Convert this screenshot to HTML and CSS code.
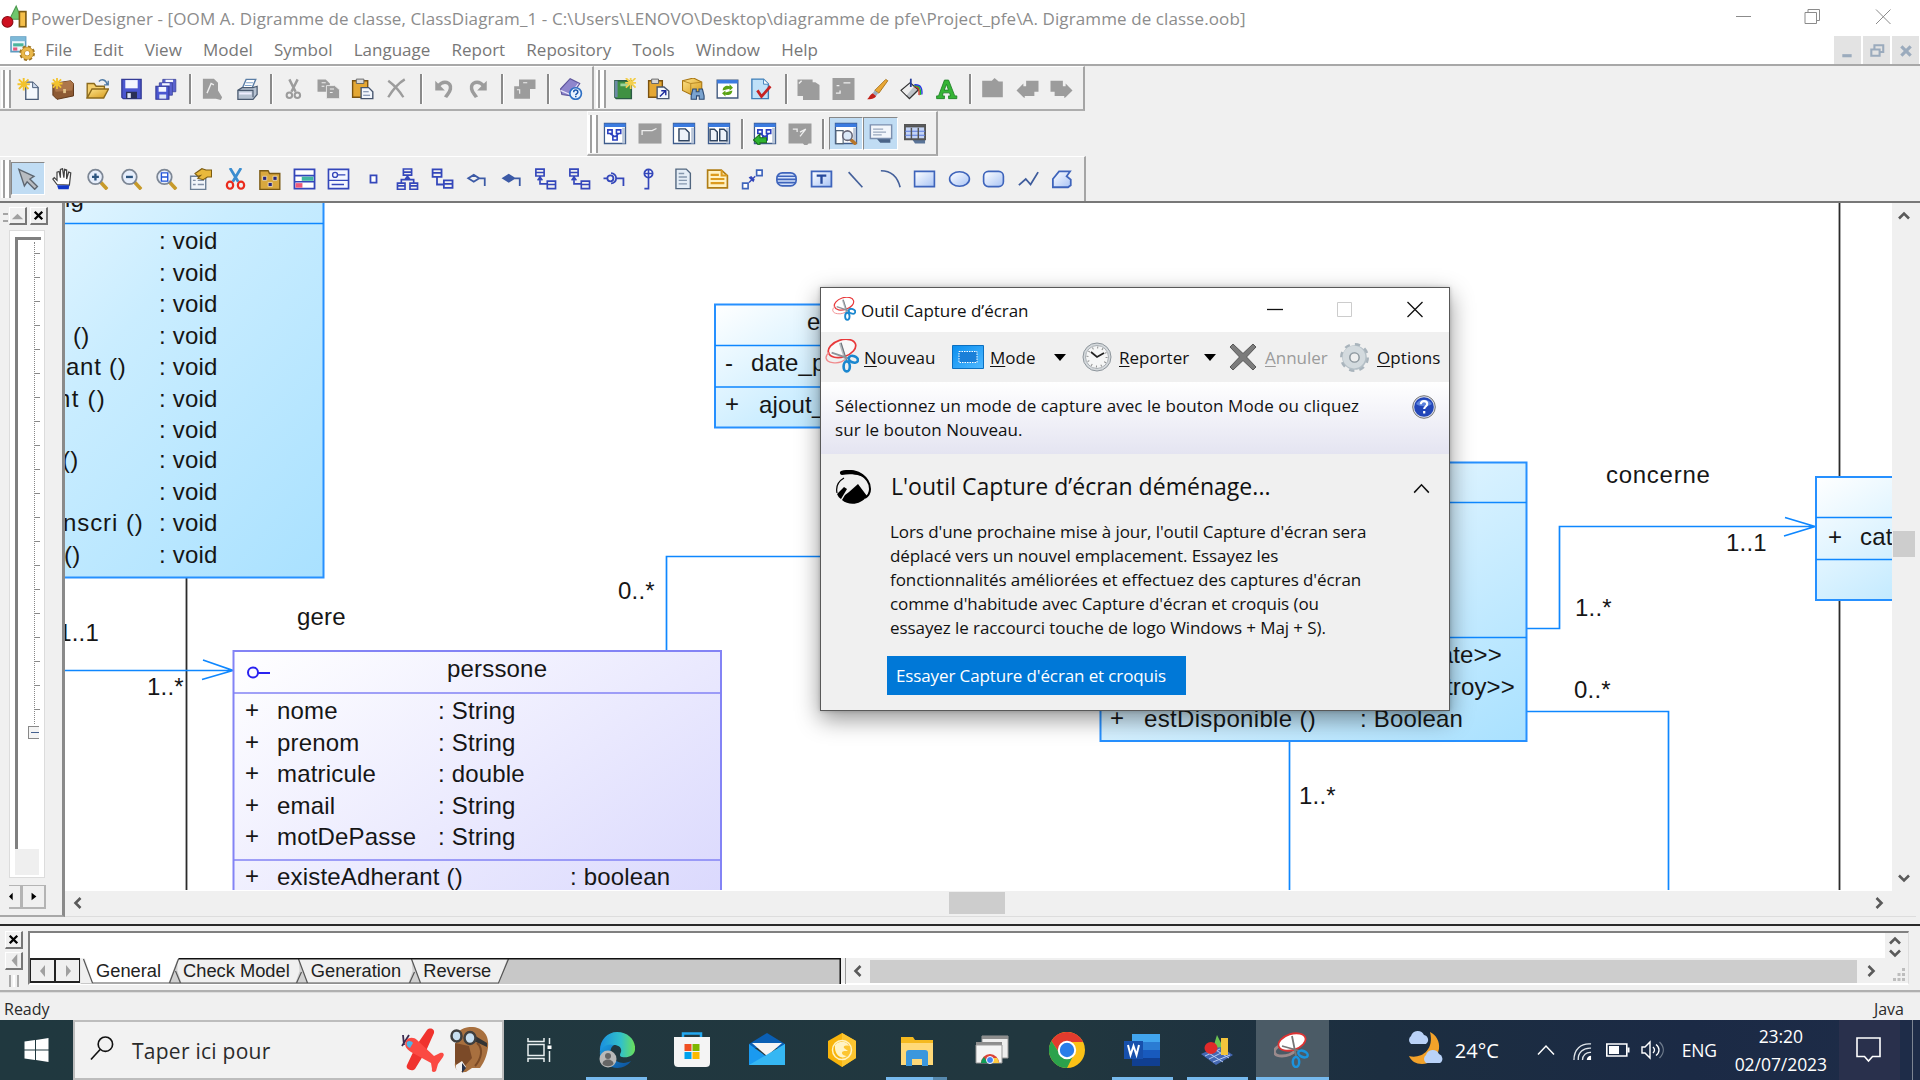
FILE: index.html
```html
<!DOCTYPE html>
<html lang="fr">
<head>
<meta charset="utf-8">
<title>PowerDesigner</title>
<link rel="stylesheet" href="styles.css">
</head>
<body>
<svg class="defs" width="0" height="0">
<defs>
<linearGradient id="gBlue" x1="0" y1="0" x2="1" y2="1"><stop offset="0" stop-color="#fff"/><stop offset="1" stop-color="#a9c4f5"/></linearGradient>
<linearGradient id="gGold" x1="0" y1="0" x2="1" y2="1"><stop offset="0" stop-color="#ffe48a"/><stop offset="1" stop-color="#d59a1c"/></linearGradient>
<linearGradient id="gClass" x1="0" y1="0" x2="1" y2="1"><stop offset="0" stop-color="#fff"/><stop offset="1" stop-color="#a9e1ff"/></linearGradient>
<linearGradient id="gClass2" x1="0" y1="0" x2="1" y2="1"><stop offset="0" stop-color="#f4fbff"/><stop offset=".45" stop-color="#caedff"/><stop offset="1" stop-color="#a9e1ff"/></linearGradient>
<linearGradient id="gPers" x1="0" y1="0" x2="1" y2="1"><stop offset="0" stop-color="#fff"/><stop offset="1" stop-color="#d5d3fd"/></linearGradient>
<linearGradient id="gEdge" x1="0" y1="0" x2="1" y2="0"><stop offset="0" stop-color="#1a8fe0"/><stop offset=".6" stop-color="#32c1c9"/><stop offset="1" stop-color="#6be058"/></linearGradient>
<linearGradient id="gEdge2" x1="0" y1="0" x2="1" y2="1"><stop offset="0" stop-color="#1b9de2"/><stop offset="1" stop-color="#0c4f9b"/></linearGradient>
<linearGradient id="gMode" x1="0" y1="0" x2="1" y2="1"><stop offset="0" stop-color="#0a8ff0"/><stop offset="1" stop-color="#4fb8ff"/></linearGradient>
</defs>
<symbol id="pd" viewBox="0 0 24 24"><path d="M8 14 14 2l5 12z" fill="#6fc66d" stroke="#4c9a50"/><circle cx="6" cy="16.500" r="5" fill="#cf1020" stroke="#8c0c14"/><rect x="17" y="7" width="6" height="14" fill="#f5bf4a" stroke="#7c5a12" stroke-width="1.500"/></symbol>
<symbol id="doc-gear" viewBox="0 0 24 24"><path d="M1 1h14v14H1z" fill="#eef6fb" stroke="#5c9ac0" stroke-width="1.500"/><path d="M1 1h14v4H1z" fill="#7db9d8"/><path d="M3 7h10v3H3z" fill="#4bb59d"/><path d="M3 11h4v3H3z" fill="#e4587c"/><circle cx="16.500" cy="16.500" r="6" fill="none" stroke="#9b7423" stroke-width="3" stroke-dasharray="2.700 2"/><circle cx="16.500" cy="16.500" r="4.200" fill="#fff" stroke="#b98527" stroke-width="4"/><circle cx="16.500" cy="16.500" r="4.200" fill="none" stroke="#eab84a" stroke-width="3"/></symbol>
<symbol id="new" viewBox="0 0 16 16"><path d="M6 3h5l4 4v8.500H6z" fill="#f4f8fd" stroke="#4a5c78"/><path d="M11 3v4h4" fill="#cfdcee" stroke="#4a5c78" stroke-width=".7"/><path d="M1 1l7 7M8 1 1 8M4.500 0v9M0 4.500h9" stroke="#f3c32c" stroke-width="1.400"/></symbol>
<symbol id="case" viewBox="0 0 16 16"><path d="M1 4 14 2l2 2v9l-12 2.500-3-3z" fill="#8d5a34" stroke="#5d3517" stroke-width=".7"/><path d="M1 4l13-2 2 2-1 5-12 1z" fill="#ad764a"/><rect x="8.500" y="8" width="2" height="3" fill="#e2c38a"/><path d="M1 1l6 6M7 1 1 7M4 0v8M0 4h8" stroke="#f3c32c" stroke-width="1.300"/></symbol>
<symbol id="open" viewBox="0 0 16 16"><path d="M.5 14.500V4h5l1.500 2h6v2" fill="#f4cf6d" stroke="#8c6a1c"/><path d="M.5 14.500 4 8h12l-3.500 6.500z" fill="url(#gGold)" stroke="#8c6a1c"/><path d="M9 2.500c2-2 5-1.500 6 2M15.800 2v3h-3" fill="none" stroke="#4f7aa5"/></symbol>
<symbol id="save" viewBox="0 0 16 16"><path d="M1 1h14v14H2l-1-1z" fill="#4a56d0" stroke="#343b96"/><path d="M3.500 1.500h9v6h-9z" fill="#f4f6ff"/><path d="M4 10h8v5H4z" fill="#2a2f55"/><path d="M5 11h2.500v3.500H5z" fill="#dfe6f6"/></symbol>
<symbol id="save-all" viewBox="0 0 16 16"><g fill="#5a62d0" stroke="#3d449c" stroke-width=".6"><path d="M6 1h9.500v9H6z"/><path d="M8 1.300h5.500V3H8z" fill="#f4f6ff" stroke="none"/><path d="M3.500 3.500H13v9H3.500z"/><path d="M5.500 3.800H11V5.500H5.500z" fill="#f4f6ff" stroke="none"/></g><path d="M1 6h9.500v9.500H1z" fill="#4a56d0" stroke="#343b96" stroke-width=".8"/><path d="M3 6.500h5.500v3.500H3z" fill="#f4f6ff"/><path d="M3.500 12h5v3h-5z" fill="#dfe6f6"/></symbol>
<symbol id="find-off" viewBox="0 0 16 16"><path d="M1 .5h8l3 3V9l3 5-1 2-3.500-1H1z" fill="#9c9c9c"/><path d="M4 11 7 4l2 1" fill="none" stroke="#eee"/></symbol>
<symbol id="print" viewBox="0 0 16 16"><path d="M4 8 7 1h7l-3 7z" fill="#fff" stroke="#5a7da5"/><path d="M7 3.500h5M6 5.500h5" stroke="#7fa3cc" stroke-width=".8"/><path d="M1 9l3-2h8l3-1v6l-3 3.500H1z" fill="#b7c3d2" stroke="#4a5a70" stroke-width=".9"/><path d="M1 9h11v5" fill="none" stroke="#4a5a70" stroke-width=".8"/><path d="M2 10.500h9v1.500H2z" fill="#eef"/></symbol>
<symbol id="cut-off" viewBox="0 0 16 16"><path d="M5 1l4.500 9M11 1 6.500 10" stroke="#9c9c9c" stroke-width="1.800"/><g fill="none" stroke="#9c9c9c" stroke-width="1.500"><circle cx="5" cy="12.500" r="2"/><circle cx="10.800" cy="12.500" r="2"/></g></symbol>
<symbol id="copy-off" viewBox="0 0 16 16"><path d="M0 1h6l3 3v6H0z" fill="#9c9c9c"/><path d="M6.500 5.500h6L16 8.500V15H6.500z" fill="#9c9c9c" stroke="#efefef" stroke-width=".6"/><path d="M3 3.500h3M3 6h2M9 8h3M9 10.500h2" stroke="#efefef" stroke-width=".8"/></symbol>
<symbol id="paste" viewBox="0 0 16 16"><path d="M.8 2h11v12H.8z" fill="#e4a733" stroke="#7a5210"/><path d="M3.500.8h5.500V4H3.500z" fill="#d8d8d8" stroke="#666" stroke-width=".7"/><path d="M7 7h5.500l3 3v5H7z" fill="#f2f6fc" stroke="#46556e"/><path d="M8.500 10h4M8.500 12.500h5" stroke="#6c80a4" stroke-width=".8"/></symbol>
<symbol id="del-off" viewBox="0 0 16 16"><path d="M2 2c4 3 8 7 11 12M14 1C9 4 5 9 2 14" fill="none" stroke="#9c9c9c" stroke-width="1.700"/></symbol>
<symbol id="undo-off" viewBox="0 0 16 16"><path d="M4 6c4-5 10-3 9 2-.5 3-2.500 4-3.500 6" fill="none" stroke="#9c9c9c" stroke-width="2.600"/><path d="M2 2v7h7z" fill="#9c9c9c"/></symbol>
<symbol id="redo-off" viewBox="0 0 16 16"><path d="M12 6C8 1 2 3 3 8c.5 3 2.500 4 3.500 6" fill="none" stroke="#9c9c9c" stroke-width="2.600"/><path d="M14 2v7H7z" fill="#9c9c9c"/></symbol>
<symbol id="prop-off" viewBox="0 0 16 16"><path d="M4 1h12v7h-4v7H.5V6H4z" fill="#9c9c9c"/><path d="M2.500 8.500h2v3M7 3.500h3" stroke="#efefef" stroke-width=".8" fill="none"/></symbol>
<symbol id="book-help" viewBox="0 0 16 16"><path d="M0 8 7 .5l7 3.500-6 9-7-1z" fill="#8f86cd" stroke="#5e559c" stroke-width=".8"/><path d="M0 9l7 3 6-8" fill="none" stroke="#e8e6f8" stroke-width=".8"/><circle cx="11" cy="11.300" r="4.200" fill="#eaf3ff" stroke="#2d6fc4" stroke-width="1.200"/><path d="M9.600 10.300c0-2 3-2 3 0 0 1-1.500 1-1.500 2.200M11.100 13v1" fill="none" stroke="#1b57ad" stroke-width="1.100"/></symbol>
<symbol id="book-new" viewBox="0 0 16 16"><path d="M1 2h12v13H2L1 14z" fill="#3f9142" stroke="#2a5a45"/><path d="M1 2h2v12H1z" fill="#6c8aa6"/><path d="M5 4h6v2H5z" fill="#9ed49b"/><path d="M9 0l7 7M16 0 9 7M12.500-1v9M8.500 3.500h8" stroke="#f3cf4c" stroke-width="1.300"/></symbol>
<symbol id="paste-link" viewBox="0 0 16 16"><path d="M.8 2h10v12H.8z" fill="#e4a733" stroke="#7a5210"/><path d="M3 .8h5V4H3z" fill="#d8d8d8" stroke="#666" stroke-width=".7"/><path d="M7 6.500h5l3.500 3v5.500H7z" fill="#f2f6fc" stroke="#46556e"/><path d="M9 13.500 13 9.500M10 9.300h3.300v3.200" fill="none" stroke="#1c2b9c"/></symbol>
<symbol id="box-find" viewBox="0 0 16 16"><path d="M0 2 8 0l6 3v7l-8 2-6-3z" fill="url(#gGold)" stroke="#a87511" stroke-width=".8"/><path d="M0 2l6 2 8-1M6 4v8" fill="none" stroke="#b78722" stroke-width=".7"/><path d="M7.500 8h2.500v2h2V8h2.500l1.200 5v2.500h-3.500V13h-2v2.500H6.300V13z" fill="#7aa3cf" stroke="#2d4a72" stroke-width=".8"/></symbol>
<symbol id="refresh" viewBox="0 0 16 16"><path d="M.5 1.500h15v13H.5z" fill="#fff" stroke="#41597e"/><path d="M.5 1.500h15V4H.5z" fill="#3b7be0"/><path d="M4.500 9c0-3 3-4 5-3V4.500L12 7 9.500 9.300V7.800M11.500 9c0 3-3 4-5 3v1.500L4 11l2.500-2v1.500" fill="#5ba314"/></symbol>
<symbol id="check-doc" viewBox="0 0 16 16"><path d="M1 .8h8.500l3.500 3.500V15H1z" fill="#bfe1f8" stroke="#3f7fb8"/><path d="M9.500 1v3.500H13" fill="#fff" stroke="#3f7fb8" stroke-width=".7"/><path d="M5 9l3 4.500L14.500 6" fill="none" stroke="#c62323" stroke-width="2"/></symbol>
<symbol id="off1" viewBox="0 0 16 16"><path d="M0 1h11v2h2l3 2v11H4v-3H0z" fill="#9c9c9c"/><path d="M1 4 3 2" stroke="#efefef"/></symbol>
<symbol id="off2" viewBox="0 0 16 16"><path d="M0 0h16v16H0z" fill="#9c9c9c"/><path d="M8 3.500h5M3 5.500h2M2.500 11h3v-2" fill="none" stroke="#eee"/></symbol>
<symbol id="brush" viewBox="0 0 16 16"><path d="M6 9 14 1l1.500 1L9 11z" fill="#e9a735" stroke="#a26b10" stroke-width=".6"/><path d="M6 9l2.500 2-1.500 2-2.500-2z" fill="#9ab"/><path d="M4.500 11 7 13c-1 2-4 2.500-6.500 2.500C2 14 2.500 12 4.500 11z" fill="#c22019"/></symbol>
<symbol id="bucket" viewBox="0 0 16 16"><path d="M.5 9 7 3.500l6 5-6.500 6.500z" fill="#bfc3c8" stroke="#333"/><path d="M1 9l6-5 2.500 2.500-5 6z" fill="#eee"/><path d="M7.500.5v6" stroke="#223a9a" stroke-width="1.300"/><path d="M10 6.500c3-1 4 2 3.500 6" fill="none" stroke="#e02020"/><path d="M10 5.800c4-1 5 3 4.500 6.500" fill="none" stroke="#18b828"/><path d="M10 5c5-.5 6 3 5.500 7" fill="none" stroke="#2838e0"/></symbol>
<symbol id="font-a" viewBox="0 0 16 16"><path d="M6.500 1.500h3L14 13h1.500v2H9.500v-2H11l-.8-2.200H5.600L5 13h1.500v2H.8v-2H2.200zM6.400 8.800h3L8 4.600z" fill="#35b435" stroke="#1b7d22" stroke-width=".6"/></symbol>
<symbol id="off3" viewBox="0 0 16 16"><path d="M.5 2h7l2-2 3 2.500h3V14H.5z" fill="#9c9c9c"/></symbol>
<symbol id="off4" viewBox="0 0 16 16"><path d="M0 9l5-5V6h2V2h9v8h-3v3H6v1.500L5 14z" fill="#9c9c9c"/></symbol>
<symbol id="off5" viewBox="0 0 16 16"><path d="M16 9l-5-5V6H9V2H0v8h3v3h7v1.500l1-.5z" fill="#9c9c9c"/></symbol>
<symbol id="win" viewBox="0 0 16 16"><path d="M.6 1h14.800v14H.6z" fill="#fff" stroke="#3e5c8c"/><path d="M.6 1h14.800v2.500H.6z" fill="#3b7be0"/><path d="M13 4h2v11h-2z" fill="#b9c6d8"/></symbol>
<symbol id="win-dia" viewBox="0 0 16 16"><use href="#win"/><path d="M3 5.500h3v2.500H3zM9 5.500h3v2.500H9zM6.500 10h3v2.500h-3zM4.500 8l3 2M10.500 8 8.500 10" fill="none" stroke="#2a3fc0" stroke-width="1.100"/></symbol>
<symbol id="win-off" viewBox="0 0 16 16"><path d="M0 1h16v14H0z" fill="#9c9c9c"/><path d="M2.500 9V6h7l3-1.500" fill="none" stroke="#eee" stroke-width=".9"/></symbol>
<symbol id="win-page" viewBox="0 0 16 16"><use href="#win"/><path d="M4.500 4.800h4.500l2.500 2.500V13h-7z" fill="#eef3fa" stroke="#2e435f"/></symbol>
<symbol id="win-pages" viewBox="0 0 16 16"><use href="#win"/><path d="M1.800 5h3l2 2v6h-5zM8.500 5h3l2 2v6h-5z" fill="#eef3fa" stroke="#2e435f"/></symbol>
<symbol id="win-back" viewBox="0 0 16 16"><use href="#win-dia"/><path d="M0 12.500l4.500-4v2.500H9v3.500H4.500V17z" fill="#2fb52f" stroke="#176a18" stroke-width=".7"/></symbol>
<symbol id="win-off2" viewBox="0 0 16 16"><path d="M0 1h16v14h-2l-1 1h-2l-1-1H0z" fill="#9c9c9c"/><path d="M3 5h3v2M8 7l4-2-4 5" fill="none" stroke="#eee" stroke-width=".9"/></symbol>
<symbol id="win-zoom" viewBox="0 0 16 16"><use href="#win"/><path d="M1 6h5v9H1z" fill="#fff" stroke="#567" stroke-width=".8"/><path d="M11 12l4 3.500" stroke="#b8772a" stroke-width="2.400"/><circle cx="9" cy="9.500" r="3.300" fill="#dbe9f8" stroke="#667" stroke-width="1.100"/></symbol>
<symbol id="note-win" viewBox="0 0 16 16"><path d="M4.500 11h10v3.500h-7z" fill="#4a6488"/><path d="M.6 2h14.800v9.500H.6z" fill="#f3f6fb" stroke="#7b8fae"/><path d="M2.500 5h7M2.500 7h9M2.500 9h6" stroke="#99a7bd" stroke-width=".9"/></symbol>
<symbol id="grid-win" viewBox="0 0 16 16"><path d="M6 12h9v3H8z" fill="#5a7498"/><path d="M1 2h14v10H1z" fill="#c4d4f6" stroke="#555" stroke-width="1.300"/><path d="M1 3h14" stroke="#555" stroke-width="1.500"/><path d="M1 6.500h14M1 9.300h14" stroke="#5c7ce0" stroke-width=".7"/><path d="M5.500 4v8M10.300 4v8" stroke="#555"/></symbol>
<symbol id="pointer" viewBox="0 0 16 16"><path d="M1 1l11 5-3 2 5.500 5.500-2 2L7 10l-2 3z" fill="#b8bcc1" stroke="#5d6670"/></symbol>
<symbol id="hand" viewBox="0 0 16 16"><path d="M4 12 1 8l1-1 2 2V3l1.500-.5L6.500 7V1L8 .5 9 7l.5-6L11 1.500V8l1.500-5 1.500.5-1 9z" fill="#fff" stroke="#444" stroke-width=".9"/><path d="M4 12.500h9l-.5 3H5z" fill="#1238c8"/></symbol>
<symbol id="mag" viewBox="0 0 16 16"><path d="M10 10l5 5.500" stroke="#c79a2a" stroke-width="2.600"/><circle cx="6.500" cy="6.500" r="5.300" fill="#e6eefb" stroke="#7d8795" stroke-width="1.300"/></symbol>
<symbol id="zin" viewBox="0 0 16 16"><use href="#mag"/><path d="M6.500 4v5M4 6.500h5" stroke="#2c5580" stroke-width="1.700"/></symbol>
<symbol id="zout" viewBox="0 0 16 16"><use href="#mag"/><path d="M4 6.500h5" stroke="#2c5580" stroke-width="1.700"/></symbol>
<symbol id="zfit" viewBox="0 0 16 16"><use href="#mag"/><path d="M4.300 3.500h4.600v6H4.300zM4.300 6.500h4.600" fill="#fff" stroke="#2456d8"/></symbol>
<symbol id="props" viewBox="0 0 16 16"><path d="M.8 6h11v9.500H.8z" fill="#f1f5fa" stroke="#6c7f96"/><path d="M2.500 9h2M2.500 12h2M6 9h4.500M6 12h4.500" stroke="#8391a6"/><path d="M4 4l5-3.500 3 1h4v5h-3l-3 2-4-1 2-2-2 .5z" fill="#e9b93c" stroke="#7c5c10" stroke-width=".8"/></symbol>
<symbol id="cut" viewBox="0 0 16 16"><path d="M4 0l6 10M12 0 6 10" stroke="#3b8dd0" stroke-width="2"/><g fill="none" stroke="#ea2b1d" stroke-width="1.600"><ellipse cx="4" cy="12.500" rx="2.300" ry="2.600"/><ellipse cx="12" cy="12.500" rx="2.300" ry="2.600"/></g></symbol>
<symbol id="pkg" viewBox="0 0 16 16"><path d="M1 2h6l1 2h7.500v11.500H1z" fill="#d9a83e" stroke="#7b5a14"/><path d="M3 6h3v3H3zM10.500 6h3v3h-3zM7 10.500h3v3H7z" fill="#26257f" stroke="#fbe8b0" stroke-width=".6"/></symbol>
<symbol id="cls" viewBox="0 0 16 16"><path d="M.7 1h14.600v14H.7z" fill="#fff" stroke="#3447ba" stroke-width="1.300"/><path d="M.7 5.500h14.600M.7 10h14.600" stroke="#3447ba" stroke-width="1.200"/><path d="M6 6.300h8.500v3H6z" fill="#3fb6a2"/><path d="M1.500 11h5v3.300h-5z" fill="#ee5a7b"/></symbol>
<symbol id="intf" viewBox="0 0 16 16"><path d="M.7 1h14.600v14H.7z" fill="#f4f7ff" stroke="#3447ba" stroke-width="1.200"/><path d="M1 9h14M3 12h9M7.500 5H13" stroke="#3447ba"/><circle cx="5.500" cy="5" r="1.800" fill="none" stroke="#3447ba"/></symbol>
<symbol id="port" viewBox="0 0 16 16"><path d="M5.800 5.300h4.400v5.400H5.800z" fill="#fff" stroke="#3447ba" stroke-width="1.300"/></symbol>
<symbol id="gen" viewBox="0 0 16 16"><path d="M5 .7h6v4.500H5zM5 3h6M.7 11h5.500v4.500H.7zM.7 13h5.500M9.800 11h5.500v4.500H9.800zM9.800 13h5.500M8 5.500v3M3.500 11V8.500h9V11M8 6l-1.500 2h3z" fill="none" stroke="#3447ba" stroke-width="1.200"/></symbol>
<symbol id="assoc" viewBox="0 0 16 16"><path d="M.8 1h6.500v5.500H.8zM.8 3.500h6.500M9 9h6.300v5.500H9zM9 11.500h6.300M4 6.500V12h5" fill="none" stroke="#3447ba" stroke-width="1.300"/></symbol>
<symbol id="aggr" viewBox="0 0 16 16"><path d="M2 7.500 6 5l4 2.500L6 10zM10 7.500h4V13" fill="none" stroke="#3c5aa6" stroke-width="1.300"/></symbol>
<symbol id="comp" viewBox="0 0 16 16"><path d="M2 7.500 6 5l4 2.500L6 10zM10 7.500h4V13" fill="none" stroke="#3c5aa6" stroke-width="1.300"/><path d="M2 7.500 6 5l4 2.500L6 10z" fill="#3c5aa6"/></symbol>
<symbol id="dep" viewBox="0 0 16 16"><path d="M1 .8h6v5H1zM1 3.300h6M9.300 9.500h6V15h-6zM9.300 12h6M4 7v4.500h5M2.300 9 4 6.500 5.700 9" fill="none" stroke="#3447ba" stroke-width="1.200"/></symbol>
<symbol id="req" viewBox="0 0 16 16"><circle cx="5" cy="7.500" r="2.200" fill="none" stroke="#3447ba" stroke-width="1.300"/><path d="M5.500 3.800a3.700 3.700 0 0 1 0 7.400M9 7.500h5.500V13M0 7.500h2.500" fill="none" stroke="#3447ba" stroke-width="1.300"/></symbol>
<symbol id="inner" viewBox="0 0 16 16"><circle cx="8" cy="4" r="3" fill="#fff" stroke="#3447ba" stroke-width="1.300"/><path d="M8 1v6M5 4h6M8 7v8H5" fill="none" stroke="#3447ba" stroke-width="1.200"/></symbol>
<symbol id="file" viewBox="0 0 16 16"><path d="M2.500.8h7.500l3 3V15H2.500z" fill="#e4edf6" stroke="#51667f"/><path d="M4.500 4h4M4.500 6.500h6M4.500 9h6M4.500 11.500h6" stroke="#8497ad"/></symbol>
<symbol id="note" viewBox="0 0 16 16"><path d="M.8 1.500h10l4.400 4V14.500H.8z" fill="#fff2c4" stroke="#b07d15" stroke-width="1.200"/><path d="M11 1.500v4h4M3 5h6M3 8h10M3 11h10" fill="none" stroke="#dc9b1e" stroke-width="1.500"/></symbol>
<symbol id="link" viewBox="0 0 16 16"><path d="M.8 11h4v4h-4zM11 1.500h4v4h-4z" fill="#fff" stroke="#3e64bb" stroke-width="1.200"/><path d="M5.500 10.500 10 6M6 7l1-.5 2 2-.5 1z" fill="#3447ba" stroke="#3447ba"/></symbol>
<symbol id="drum" viewBox="0 0 16 16"><rect x="1" y="3.500" width="14" height="9.500" rx="4" fill="#d5e2fa" stroke="#3e64bb" stroke-width="1.200"/><path d="M1.500 6h13M1 8.300h14M1.500 10.600h13" stroke="#3e64bb" stroke-width="1.200"/></symbol>
<symbol id="title-t" viewBox="0 0 16 16"><path d="M.8 2.500h14.400v11H.8z" fill="url(#gBlue)" stroke="#3e64bb" stroke-width="1.300"/><path d="M4.500 5.500h7M8 5.500v6" stroke="#27499b" stroke-width="1.700"/></symbol>
<symbol id="line" viewBox="0 0 16 16"><path d="M3 3l10 11" stroke="#44609a" stroke-width="1.200"/></symbol>
<symbol id="arc" viewBox="0 0 16 16"><path d="M1 2c7 0 12 4 14 12" fill="none" stroke="#44609a" stroke-width="1.200"/></symbol>
<symbol id="rect" viewBox="0 0 16 16"><path d="M.8 2.500h14.400v11H.8z" fill="url(#gBlue)" stroke="#3e64bb" stroke-width="1.200"/></symbol>
<symbol id="oval" viewBox="0 0 16 16"><ellipse cx="8" cy="8" rx="7.200" ry="5.300" fill="url(#gBlue)" stroke="#3e64bb" stroke-width="1.200"/></symbol>
<symbol id="rrect" viewBox="0 0 16 16"><rect x=".8" y="2.500" width="14.400" height="11" rx="3.500" fill="url(#gBlue)" stroke="#3e64bb" stroke-width="1.200"/></symbol>
<symbol id="poly" viewBox="0 0 16 16"><path d="M1 12.500 6 8l3.500 4L15 3" fill="none" stroke="#3e5c9c" stroke-width="1.300"/></symbol>
<symbol id="shape" viewBox="0 0 16 16"><path d="M1 14V8l4.500-5.500h8L11 6l3 2.500v4L12 14z" fill="url(#gBlue)" stroke="#3e64bb" stroke-width="1.300"/></symbol>
<symbol id="chev" viewBox="0 0 12 12"><path d="M1 8.500 6 3.500l5 5" fill="none" stroke="#5a5a5a" stroke-width="2.600"/></symbol>
<symbol id="snip" viewBox="0 0 36 36"><g fill="none"><ellipse cx="18" cy="10" rx="15" ry="9" transform="rotate(-18 18 10)" stroke="#e8393b" stroke-width="1.800" fill="#fff" fill-opacity=".6"/><path d="M5 14c-6 4-5 10 3 11 6 1 11-1 14-4" stroke="#f08a8c" stroke-width="1.400"/></g><path d="M16 4l6 19" stroke="#b9bec2" stroke-width="2.600"/><path d="M17 4l6 19" stroke="#6f767c" stroke-width="1.200"/><path d="M7 14.500l18 6" stroke="#8d9399" stroke-width="2"/><g fill="none" stroke="#1b87cf" stroke-width="2.800"><ellipse cx="30" cy="21.500" rx="5" ry="3.400" transform="rotate(20 30 21.500)"/><ellipse cx="23" cy="29" rx="3.300" ry="5.300"/></g></symbol>
</svg>

<header class="titlebar">
  <svg class="app-ic"><use href="#pd"/></svg>
  <span class="title">PowerDesigner - [OOM A. Digramme de classe, ClassDiagram_1 - C:\Users\LENOVO\Desktop\diagramme de pfe\Project_pfe\A. Digramme de classe.oob]</span>
  <svg class="winctl" viewBox="0 0 184 36"><path d="M12 16.500h15M81 12.500h11.500v11H81zM84 12.500v-3h11.500V20.500H92.500M152 9.500l14.500 14.500M166.500 9.500 152 24" fill="none" stroke="#8b8b8b" stroke-width="1"/></svg>
</header>

<nav class="menubar">
  <svg class="menu-ic"><use href="#doc-gear"/></svg>
  <span>File</span><span>Edit</span><span>View</span><span>Model</span><span>Symbol</span><span>Language</span><span>Report</span><span>Repository</span><span>Tools</span><span>Window</span><span>Help</span>
  <div class="mdi">
    <svg viewBox="0 0 26 26"><path d="M8 17h9v3H8z" fill="#9babbd"/></svg>
    <svg viewBox="0 0 26 26"><path d="M11 12V8.500h8.500V15H17M8 12.500h8v6H8z" fill="none" stroke="#9babbd" stroke-width="2"/></svg>
    <svg viewBox="0 0 26 26"><path d="M9 9.500l9 9M18 9.500l-9 9" stroke="#9babbd" stroke-width="3"/></svg>
  </div>
</nav>

<section class="toolbars">
  <div class="tb-row">
    <div class="tb b1">
      <i class="grip"></i>
      <b><svg><use href="#new"/></svg></b><b><svg><use href="#case"/></svg></b><b><svg><use href="#open"/></svg></b><b><svg><use href="#save"/></svg></b><b><svg><use href="#save-all"/></svg></b><i class="sep"></i>
      <b><svg><use href="#find-off"/></svg></b><b><svg><use href="#print"/></svg></b><i class="sep"></i>
      <b><svg><use href="#cut-off"/></svg></b><b><svg><use href="#copy-off"/></svg></b><b><svg><use href="#paste"/></svg></b><b><svg><use href="#del-off"/></svg></b><i class="sep"></i>
      <b><svg><use href="#undo-off"/></svg></b><b><svg><use href="#redo-off"/></svg></b><i class="sep"></i>
      <b><svg><use href="#prop-off"/></svg></b><i class="sep"></i>
      <b><svg><use href="#book-help"/></svg></b>
    </div>
    <div class="tb b2">
      <i class="grip"></i>
      <b><svg><use href="#book-new"/></svg></b><b><svg><use href="#paste-link"/></svg></b><b><svg><use href="#box-find"/></svg></b><b><svg><use href="#refresh"/></svg></b><b><svg><use href="#check-doc"/></svg></b><i class="sep"></i>
      <b><svg><use href="#off1"/></svg></b><b><svg><use href="#off2"/></svg></b><b><svg><use href="#brush"/></svg></b><b><svg><use href="#bucket"/></svg></b><b><svg><use href="#font-a"/></svg></b><i class="sep"></i>
      <b><svg><use href="#off3"/></svg></b><b><svg><use href="#off4"/></svg></b><b><svg><use href="#off5"/></svg></b>
    </div>
  </div>
  <div class="tb-row">
    <div class="tb b3">
      <i class="grip"></i>
      <b><svg><use href="#win-dia"/></svg></b><b><svg><use href="#win-off"/></svg></b><b><svg><use href="#win-page"/></svg></b><b><svg><use href="#win-pages"/></svg></b><i class="sep"></i>
      <b><svg><use href="#win-back"/></svg></b><b><svg><use href="#win-off2"/></svg></b><i class="sep"></i>
      <b class="on"><svg><use href="#win-zoom"/></svg></b><b class="on"><svg><use href="#note-win"/></svg></b><b><svg><use href="#grid-win"/></svg></b>
    </div>
  </div>
  <div class="tb-row">
    <div class="tb b4">
      <i class="grip"></i>
      <b class="on"><svg><use href="#pointer"/></svg></b><b><svg><use href="#hand"/></svg></b><b><svg><use href="#zin"/></svg></b><b><svg><use href="#zout"/></svg></b><b><svg><use href="#zfit"/></svg></b><b><svg><use href="#props"/></svg></b><b><svg><use href="#cut"/></svg></b><b><svg><use href="#pkg"/></svg></b><b><svg><use href="#cls"/></svg></b><b><svg><use href="#intf"/></svg></b><b><svg><use href="#port"/></svg></b><b><svg><use href="#gen"/></svg></b><b><svg><use href="#assoc"/></svg></b><b><svg><use href="#aggr"/></svg></b><b><svg><use href="#comp"/></svg></b><b><svg><use href="#dep"/></svg></b><b><svg><use href="#dep"/></svg></b><b><svg><use href="#req"/></svg></b><b><svg><use href="#inner"/></svg></b><b><svg><use href="#file"/></svg></b><b><svg><use href="#note"/></svg></b><b><svg><use href="#link"/></svg></b><b><svg><use href="#drum"/></svg></b><b><svg><use href="#title-t"/></svg></b><b><svg><use href="#line"/></svg></b><b><svg><use href="#arc"/></svg></b><b><svg><use href="#rect"/></svg></b><b><svg><use href="#oval"/></svg></b><b><svg><use href="#rrect"/></svg></b><b><svg><use href="#poly"/></svg></b><b><svg><use href="#shape"/></svg></b>
    </div>
  </div>
</section>

<main class="work">
  <aside class="browser">
    <div class="br-head"><i class="stub"></i><span class="btn3d"><svg viewBox="0 0 16 16"><path d="M2 12 8 6l6 6z" fill="#a0a0a0"/></svg></span><span class="btn3d"><svg viewBox="0 0 16 16"><path d="M4 4l8 8M12 4l-8 8" stroke="#000" stroke-width="2.500"/></svg></span></div>
    <div class="br-frame">
      <div class="br-tree"><i class="vdots"></i><i class="ticks"></i><i class="minus"></i></div>
      <div class="br-foot"></div>
    </div>
    <div class="br-nav"><span class="half"><svg viewBox="0 0 12 22"><path d="M4 7v8L0 11z"/></svg></span><span><svg viewBox="0 0 22 22"><path d="M9 7v8l5-4z"/></svg></span></div>
  </aside>
  <section class="editor">
    <svg class="diagram" viewBox="65 203 1827 687">
      <g class="blk"><path d="M186.500 577V890M1839.500 203V477M1839.500 600V890"/></g>
      <g class="con"><path d="M65 670.500H233M203 660l30 10.500-31 9M666.500 651V556.500H830M1527 628.500h32.500v-102H1816M1785 517.500l30 9-31 9.500M1527 711.500h141.500V890M1289.500 741V890"/></g>
      <g class="cls"><rect x="-60" y="150" width="383.500" height="427.500" fill="url(#gClass2)"/><path d="M60 223.500H323.500"/></g>
      <g class="cls"><rect x="715" y="304.500" width="200" height="123" fill="url(#gClass)"/><path d="M715 345.500h200M715 387h200"/></g>
      <g class="cls"><rect x="1100.500" y="462.500" width="426" height="278.500" fill="url(#gClass)"/><path d="M1100.500 502.500h426M1100.500 637.500h426"/></g>
      <g class="cls"><rect x="1816" y="477" width="200" height="123" fill="url(#gClass)"/><path d="M1816 517.500h200M1816 559.500h200"/></g>
      <g class="cls pers"><rect x="233.500" y="651" width="487.500" height="330" fill="url(#gPers)"/><path d="M233.500 693h487.500M233.500 860h487.500"/></g>
      <g fill="none" stroke="#2a22f0" stroke-width="2"><circle cx="253" cy="672.500" r="5"/><path d="M258 673h12"/></g>
      <g class="txt">
        <text x="84" y="207" text-anchor="end">mg</text>
        <text x="159" y="249">: void</text><text x="159" y="281">: void</text><text x="159" y="312">: void</text><text x="159" y="344">: void</text><text x="159" y="375">: void</text><text x="159" y="407">: void</text><text x="159" y="438">: void</text><text x="159" y="468">: void</text><text x="159" y="500">: void</text><text x="159" y="531">: void</text><text x="159" y="563">: void</text>
        <text x="73" y="344">()</text><text x="66" y="375" textLength="60">ant ()</text><text x="57" y="407" textLength="48">nt ()</text><text x="62" y="468">()</text><text x="63" y="531" textLength="80">nscri ()</text><text x="64" y="563">()</text>
        <text x="99" y="641" text-anchor="end">1..1</text><text x="147" y="695">1..*</text><text x="297" y="625">gere</text><text x="618" y="599">0..*</text>
        <text x="447" y="677">perssone</text>
        <text x="245" y="718">+</text><text x="277" y="719">nome</text><text x="438" y="719">: String</text>
        <text x="245" y="750">+</text><text x="277" y="751">prenom</text><text x="438" y="751">: String</text>
        <text x="245" y="781">+</text><text x="277" y="782">matricule</text><text x="438" y="782">: double</text>
        <text x="245" y="813">+</text><text x="277" y="814">email</text><text x="438" y="814">: String</text>
        <text x="245" y="844">+</text><text x="277" y="845">motDePasse</text><text x="438" y="845">: String</text>
        <text x="245" y="884">+</text><text x="277" y="885">existeAdherant ()</text><text x="570" y="885">: boolean</text>
        <text x="807" y="330">e</text><text x="725" y="371">-</text><text x="751" y="371">date_p</text><text x="725" y="412">+</text><text x="759" y="413">ajout_</text>
        <text x="1502" y="663" text-anchor="end">&lt;&lt;create&gt;&gt;</text><text x="1515" y="695" text-anchor="end">&lt;&lt;destroy&gt;&gt;</text>
        <text x="1110" y="726">+</text><text x="1144" y="727" textLength="172">estDisponible ()</text><text x="1360" y="727">: Boolean</text>
        <text x="1299" y="804">1..*</text><text x="1606" y="483" textLength="104">concerne</text><text x="1726" y="551">1..1</text><text x="1575" y="616">1..*</text><text x="1574" y="698">0..*</text>
        <text x="1828" y="545">+</text><text x="1860" y="545">cat</text>
      </g>
    </svg>
    <div class="vscroll"><svg class="chev"><use href="#chev"/></svg><i></i><svg class="chev down"><use href="#chev"/></svg></div>
    <div class="hscroll"><svg class="chev left"><use href="#chev"/></svg><i></i><svg class="chev right"><use href="#chev"/></svg></div>
  </section>
</main>

<section class="output">
  <div class="out-ctl"><span class="btn3d"><svg viewBox="0 0 16 16"><path d="M4 4l8 8M12 4l-8 8" stroke="#000" stroke-width="2.500"/></svg></span><span class="btn3d"><svg viewBox="0 0 16 16"><path d="M12 1v14L6 8z" fill="#a0a0a0"/></svg></span><i class="hgrip"></i></div>
  <div class="out-box">
    <div class="out-text"></div>
    <div class="out-v"><svg class="chev"><use href="#chev"/></svg><svg class="chev down"><use href="#chev"/></svg></div>
    <div class="out-tabs">
      <div class="navs"><span><svg viewBox="0 0 12 12"><path d="M8 0v12L3 6z" fill="#a0a0a0"/></svg></span><span><svg viewBox="0 0 12 12"><path d="M4 0v12l5-6z" fill="#a0a0a0"/></svg></span></div>
      <div class="tabs">
        <svg viewBox="80 958 760 26" class="tab-shape"><path d="M80 959H840V984H80z" fill="#c8c8c8"/><path d="M80 958H507L498 983H80z" fill="#f0f0f0"/><path d="M84 957H178L169 984H93z" fill="#fff"/><path d="M177 959l-9 24h13l-4-12zM298 959l9 24h-12l4-12zM411 959l9 24h-12l4-12z" fill="#d0d0d0"/><path d="M83 959l9 24M178 959l-9 24M175 971l5 12M298 959l9 24M301 972l-5 11M411 959l9 24M414 972l-5 11M508 959l-10 24H92" fill="none" stroke="#555" stroke-width="1.200"/><path d="M178 958.500H840V984" fill="none" stroke="#111" stroke-width="2"/></svg>
        <span class="t1">General</span><span class="t2">Check Model</span><span class="t3">Generation</span><span class="t4">Reverse</span>
      </div>
      <div class="out-h"><svg class="chev left"><use href="#chev"/></svg><i></i><svg class="chev right"><use href="#chev"/></svg></div>
      <svg class="resize" viewBox="0 0 14 14"><path d="M9 0h3v3H9zM4.500 5h3v3h-3zM9 5h3v3H9zM0 10h3v3H0zM4.500 10h3v3h-3zM9 10h3v3H9z" fill="#bdbdbd"/></svg>
    </div>
  </div>
</section>

<footer class="status"><span>Ready</span><span>Java</span></footer>

<footer class="taskbar">
  <div class="start"><svg viewBox="0 0 24 24"><path d="M0 3.500 10.500 2v9.500H0zM11.500 1.900 24 0v11.500H11.500zM0 12.500h10.500V22L0 20.500zM11.500 12.500H24V24l-12.500-1.900z" fill="#fff"/></svg></div>
  <div class="search">
    <svg class="lens" viewBox="0 0 26 26"><circle cx="16" cy="9" r="7.500" fill="none" stroke="#111" stroke-width="1.700"/><path d="M10.500 14.500 1 25" stroke="#111" stroke-width="1.700"/></svg>
    <span>Taper ici pour</span>
    <svg class="plane" viewBox="0 0 44 46"><path d="M8 8 1 19M2 8l1 10" stroke="#3c2b50" stroke-width="1.800" fill="none"/><path d="M26 3c3-3 8-1 7 3L25 24 14 42c-3 3-10 0-8-4l9-19z" fill="#f0332e"/><path d="M5 14c2-4 8-4 11-1l17 16 6-3c3-1 5 1 3 4l-5 7-2 7c-2 2-5 1-4-2l-1-6L10 25C5 22 3 18 5 14z" fill="#fb4a43"/><path d="M6 15c2-2 5-1 6 1l-3 5c-3-1-4-4-3-6z" fill="#4cb5e8"/></svg>
    <svg class="pilot" viewBox="0 0 40 46"><path d="M9 4C18-3 33-1 37 10c3 8 0 22-7 31h-8l-6 4c-8 1-12-3-11-9L6 16z" fill="#a8703f"/><path d="M5 16l14 3 3 12-8 9c-6 0-9-2-9-6z" fill="#7b4a28"/><path d="M27 16c7 6 4 16-2 23" stroke="#7a4a26" stroke-width="2" fill="none"/><path d="M6 38l6-4 4 6-6 6c-3-1-5-5-4-8z" fill="#f2f2f2"/><path d="M12 36l4 5-4 5z" fill="#26324c"/><path d="M22 7l15 9v4L24 14z" fill="#333"/><g fill="#c8dff0" stroke="#3f3f3f" stroke-width="2.500"><ellipse cx="6.500" cy="9" rx="5" ry="5.500"/><ellipse cx="20" cy="11" rx="5.500" ry="6"/></g></svg>
  </div>
  <div class="taskview"><svg viewBox="0 0 26 26"><path d="M1 1v3.500h16V1M1 25v-3.500h16V25M1 7.500h16v11H1zM22.500 1v6M22.500 14v11" fill="none" stroke="#e8eef0" stroke-width="1.500"/><path d="M20.500 8.500h4v3.500h-4z" fill="#fff"/></svg></div>
  <div class="apps">
    <div class="app run"><svg viewBox="0 0 36 36"><path d="M18 0C30 0 37 9 36 18c-1 6-7 8-13 7-3-1-2-3-1-5 1-4-2-7-7-7C9 13 3 17 1 20 0 9 8 0 18 0z" fill="url(#gEdge)"/><path d="M1 20c2-6 8-9 14-7-5 3-5 12 2 16 6 3 11 2 15 0-5 7-13 8-19 6C5 33 0 27 1 20z" fill="url(#gEdge2)"/><circle cx="9" cy="27" r="8.500" fill="#b9b9b9"/><circle cx="9" cy="24" r="3" fill="#666"/><path d="M3.500 32c0-6 11-6 11 0-3 3-8 3-11 0z" fill="#666"/></svg></div>
    <div class="app"><svg viewBox="0 0 36 36"><path d="M9 7V1.500h18V7" fill="none" stroke="#22a8f0" stroke-width="2.500"/><path d="M0 5h36v26c0 3-2 4-4 4H4c-2 0-4-1-4-4z" fill="#f4f4f4"/><path d="M10.500 12h7v7h-7z" fill="#f05022"/><path d="M18.500 12h7v7h-7z" fill="#7db700"/><path d="M10.500 20h7v7h-7z" fill="#00a3ee"/><path d="M18.500 20h7v7h-7z" fill="#fdb900"/></svg></div>
    <div class="app"><svg viewBox="0 0 36 36"><path d="M0 12 18 1l18 11v4H0z" fill="#0a5fb4"/><path d="M3 11h30L18 24z" fill="#f4f4f4"/><path d="M0 12l18 13L36 12v21H0z" fill="#1a9af0"/><path d="M0 33 36 12v21z" fill="#35b7f3"/></svg></div>
    <div class="app"><svg viewBox="0 0 36 36"><path d="M18 1l14 8v17l-14 9-14-9V9z" fill="#f8b40c"/><path d="M18 1l14 8v17l-14 9z" fill="#fcc530"/><circle cx="18" cy="18" r="9.500" fill="none" stroke="#fff3c4" stroke-width="1.500"/><path d="M11 13c4-5 12-4 14 1-4-1-6 0-5 2l4 3c-4 0-6 0-6 2s3 3 5 3c-6 4-13-1-12-11z" fill="#fff3c4"/></svg></div>
    <div class="app run multi"><svg viewBox="0 0 36 36"><path d="M2 5h12l2 3h18v24H2z" fill="#f5b91f"/><path d="M2 11h32v22H2z" fill="#ffd978"/><path d="M7 34V21c0-2 1-3 3-3h16c2 0 3 1 3 3v13h-6v-7H13v7z" fill="#3b97dd"/></svg></div>
    <div class="app"><svg viewBox="0 0 36 36"><path d="M8 4h26v22H8z" fill="#eee" stroke="#999"/><path d="M8 4h26v3H8zM2 10h26v3H2z" fill="#8d8d8d"/><path d="M2 13h26v18H2z" fill="#f4f4f4" stroke="#999"/><path d="M7 31a9 9 0 0 1 18 0z" fill="#db4437"/><path d="M7 31a9 9 0 0 1 3-6l4 6z" fill="#109d58"/><path d="M25 31a9 9 0 0 0-2-5h-6v5z" fill="#ffcd40"/><circle cx="16" cy="28" r="3.500" fill="#4285f4" stroke="#fff"/></svg></div>
    <div class="app"><svg viewBox="0 0 36 36"><circle cx="18" cy="18" r="18" fill="#fbc116"/><path d="M2.400 9A18 18 0 0 1 33.600 9L34 10H18a8 8 0 0 0-7 12z" fill="#e33b2e"/><path d="M2.400 9A18 18 0 0 0 18 36l7-14a8 8 0 0 1-14 0z" fill="#2ba24c"/><circle cx="18" cy="18" r="8.200" fill="#2a7de9" stroke="#fff" stroke-width="2"/></svg></div>
    <div class="app run"><svg viewBox="0 0 36 36"><path d="M8 2h28v32H8z" fill="#103f91"/><path d="M8 2h28v8H8z" fill="#41a5ee"/><path d="M8 10h28v8H8z" fill="#2b7cd3"/><path d="M8 18h28v8H8z" fill="#185abd"/><path d="M0 9h19v18H0z" fill="#1750ac"/><path d="M4 13l2.500 10L9.500 14l3 9L15 13" fill="none" stroke="#fff" stroke-width="2"/></svg></div>
    <div class="app run"><svg viewBox="0 0 36 36"><path d="M2 22l18-8 14 9-17 10z" fill="#4568b3"/><path d="M6 24l15-7M10 27l16-8M14 30l17-7M8 20l16 10M15 17l15 9" stroke="#b8cbf0" stroke-width="1"/><path d="M14 16 18 3l6 12z" fill="#6cc452"/><path d="M22 6h7v17h-7z" fill="#f3c53c"/><ellipse cx="12" cy="16" rx="6.500" ry="6" fill="#e02a2a"/></svg></div>
    <div class="app run active"><svg viewBox="0 0 36 36"><path d="M5 14c-7 4-6 10 3 10 6 0 10-2 13-5" stroke="#9b8a8c" stroke-width="3" fill="none"/><ellipse cx="18" cy="10" rx="14" ry="8" transform="rotate(-18 18 10)" fill="#fff" stroke="#d33" stroke-width="1.800"/><path d="M18 4l4 20M8 14l18 5" stroke="#777" stroke-width="1.800"/><g fill="none" stroke="#1b93dd" stroke-width="2.500"><ellipse cx="29" cy="22" rx="5" ry="3" transform="rotate(24 29 22)"/><ellipse cx="22" cy="30" rx="3.200" ry="5"/></g></svg></div>
  </div>
  <div class="tray">
    <svg class="weather" viewBox="0 0 38 36"><path d="M24 2c6 3 10 9 9 17-2 9-9 15-17 15-6 0-11-3-13-8 10 3 26-4 21-24z" fill="#f3a22a"/><g fill="#b9d2f8"><path d="M5 14a5 5 0 0 1 0-8 7 7 0 0 1 13-1 5 5 0 0 1 2 9z"/><path d="M20 33a5 5 0 0 1 0-8 7 7 0 0 1 13-1 5 5 0 0 1 1 9z"/></g></svg>
    <span class="temp">24°C</span>
    <svg class="up" viewBox="0 0 18 12"><path d="M1 10.500 9 2l8 8.500" fill="none" stroke="#fff" stroke-width="1.500"/></svg>
    <svg class="wifi" viewBox="0 0 20 20"><g fill="none" stroke="#dfe5ea" stroke-width="1.400"><path d="M1 19C1 8 8 1 19 2"/><path d="M5.500 19C5 11 11 6 19 6.500"/><path d="M10 19c0-5 4-8.500 9-8"/></g><path d="M14.500 19c0-2.500 2-4.500 4.500-4.500V19z" fill="#fff"/></svg>
    <svg class="bat" viewBox="0 0 24 14"><path d="M.8 1h20v12H.8z" fill="none" stroke="#fff" stroke-width="1.600"/><path d="M3 3h10v8H3zM21.500 4.500h2v5h-2z" fill="#fff"/></svg>
    <svg class="vol" viewBox="0 0 24 20"><path d="M1 7h3l5-5v16l-5-5H1z" fill="none" stroke="#fff" stroke-width="1.400"/><path d="M12 7c2 2 2 4 0 6M15 4.500c4 3 4 8 0 11" fill="none" stroke="#fff" stroke-width="1.300"/><path d="M18.500 2c5 5 5 11 0 16" fill="none" stroke="#6e7b8c" stroke-width="1.300"/></svg>
    <span class="lang">ENG</span>
    <div class="clock"><span>23:20</span><span>02/07/2023</span></div>
    <div class="notif"><svg viewBox="0 0 26 26"><path d="M1 1h23v18.500h-7.500L12.500 24l-4-4.500H1z" fill="none" stroke="#fff" stroke-width="1.600"/></svg></div>
  </div>
</footer>

<div class="dialog">
  <div class="d-title"><svg class="d-ic"><use href="#snip"/></svg><span>Outil Capture d’écran</span>
    <svg class="d-ctl" viewBox="0 0 184 44"><path d="M3 21.500h16" stroke="#111" stroke-width="1.300"/><path d="M73.500 14.500h14v14h-14z" fill="none" stroke="#ccc"/><path d="M143.500 14l15 15M158.500 14l-15 15" stroke="#111" stroke-width="1.300"/></svg></div>
  <div class="d-tools">
    <svg class="i-new"><use href="#snip"/></svg><span class="l-new"><u>N</u>ouveau</span>
    <svg class="i-mode" viewBox="0 0 32 24"><path d="M.5.5h31v23H.5z" fill="url(#gMode)" stroke="#0b6fc0"/><path d="M7 6.500h18v11H7z" fill="#1a7fd8" stroke="#fff" stroke-dasharray="1.500 1"/></svg><span class="l-mode"><u>M</u>ode</span><i class="caret c1"></i>
    <svg class="i-clock" viewBox="0 0 30 30"><circle cx="15" cy="15" r="14" fill="#d6dadd" stroke="#8e969c"/><circle cx="15" cy="15" r="11.500" fill="#f5f6f6" stroke="#a9afb4"/><circle cx="15" cy="15" r="9.500" fill="none" stroke="#888" stroke-width="2" stroke-dasharray="1 3.970"/><path d="M9 10l6 5 7-4" fill="none" stroke="#222" stroke-width="1.700"/></svg><span class="l-rep"><u>R</u>eporter</span><i class="caret c2"></i>
    <svg class="i-x" viewBox="0 0 28 28"><path d="M1 4 4 1l10 9.500L24 1l3 3-9.500 10L27 24l-3 3-10-9.500L4 27l-3-3 9.500-10z" fill="#7c7c7c" stroke="#575757"/></svg><span class="l-ann"><u>A</u>nnuler</span>
    <svg class="i-gear" viewBox="0 0 30 34"><circle cx="15" cy="17" r="13" fill="none" stroke="#a9b4bc" stroke-width="4" stroke-dasharray="5.200 5.010"/><circle cx="15" cy="17" r="8.500" fill="none" stroke="#b4bfc6" stroke-width="8.500"/><circle cx="14.500" cy="16.500" r="8.500" fill="none" stroke="#d3dade" stroke-width="6.500"/><circle cx="15" cy="17" r="4.800" fill="#efefef" stroke="#8b959c" stroke-width="1.500"/></svg><span class="l-opt"><u>O</u>ptions</span>
  </div>
  <div class="d-info"><p>Sélectionnez un mode de capture avec le bouton Mode ou cliquez<br>sur le bouton Nouveau.</p><svg class="help" viewBox="0 0 24 24"><circle cx="12" cy="12" r="11.300" fill="#d8dbe8" stroke="#777"/><circle cx="12" cy="12" r="9.800" fill="#2346b8"/><path d="M4 9a9 8 0 0 1 16 0c-4 3-12 3-16 0z" fill="#5c82dc"/><path d="M8.800 9.300c0-4.500 6.400-4 6.400-.3 0 2.500-3 2.500-3 5M12.200 16v2.500" fill="none" stroke="#fff" stroke-width="2.200"/></svg></div>
  <div class="d-body">
    <div class="d-head"><svg class="d-logo" viewBox="0 0 36 34"><path d="M6 2.500C20-1 34 7 34 19c0 4-2 7-5 9" fill="none" stroke="#000" stroke-width="2"/><path d="M5 1c10-3 22 0 27 9-6-5-16-7-26-5-2 0-3-3-1-4z"/><path d="M8 8C1 12 0 18 1 23" fill="none" stroke="#000" stroke-width="1.200"/><path d="M1 24 8 17l3 2-6 10c-2-1-3-3-4-5zM6 30l3-5 4-3 9-8 9 12c-6 9-18 10-25 4z"/></svg><h2>L'outil Capture d’écran déménage...</h2><svg class="d-up" viewBox="0 0 18 12"><path d="M1 10.500 9 2l8 8.500" fill="none" stroke="#111" stroke-width="1.700"/></svg></div>
    <p>Lors d'une prochaine mise à jour, l'outil Capture d'écran sera<br>déplacé vers un nouvel emplacement. Essayez les<br>fonctionnalités améliorées et effectuez des captures d'écran<br>comme d'habitude avec Capture d'écran et croquis (ou<br>essayez le raccourci touche de logo Windows + Maj + S).</p>
    <button>Essayer Capture d'écran et croquis</button>
  </div>
</div>
</body>
</html>
```
FILE: styles.css
```css
* { box-sizing: border-box; }
body {
  margin: 0; width: 1920px; height: 1080px; overflow: hidden; position: relative;
  display: flex; flex-direction: column; background: #f0f0f0;
  font-family: "Open Sans", "Noto Sans", sans-serif;
}
.defs { position: absolute; }
svg { display: block; flex: none; }
span { white-space: nowrap; }

.titlebar { height: 36px; background: #fff; display: flex; align-items: center; padding-left: 1px; }
.app-ic { width: 26px; height: 26px; margin-right: 4px; margin-top: -2px; }
.title { color: #8c8c8c; font-size: 17px; letter-spacing: 0.11px; }
.winctl { width: 184px; height: 36px; margin-left: auto; margin-right: 12px; }

.menubar { height: 30px; background: #fff; border-bottom: 2px solid #a8a8a8; display: flex; align-items: center; gap: 21.200px; padding-left: 10px; color: #777; font-size: 17px; }
.menubar span { margin-top: -1px; }
.menu-ic { width: 25px; height: 25px; margin: -4px -11px 0 0; }
.mdi { display: flex; gap: 2px; margin-left: auto; margin-right: 1px; align-self: stretch; }
.mdi svg { width: 27px; height: 28px; background: #e3e3e3; }

.toolbars { height: 135px; }
.tb-row { height: 45px; display: flex; }
.tb { height: 45px; display: flex; align-items: center; padding-top: 1px; border-top: 1px solid #fff; border-bottom: 2px solid #adadad; border-right: 2px solid #a5a5a5; }
.b1 { width: 594px; }
.b2 { width: 491px; }
.b3 { margin-left: 587px; width: 351px; border-left: 1px solid #fff; }
.b4 { width: 1086px; padding: 0 0 1px; border-bottom: 0; }
.tb b { width: 34.450px; height: 33px; flex: none; display: flex; align-items: center; justify-content: center; }
.b4 b { width: 34.490px; }
.tb b svg { width: 23px; height: 22px; }
.b3 b svg { width: 24px; height: 23px; }
.tb b.on { background: #c0dcf3; border: 1px solid #888; border-right-color: #fff; border-bottom-color: #fff; }
.grip { flex: none; width: 10px; height: 38px; border-right: 2px solid #a0a0a0; box-shadow: inset 2px 0 #fff, inset 4px 0 #a0a0a0, inset 8px 0 #fff; }
.b1 .grip { margin-left: 1px; }
.b4 .grip { margin-left: 1px; }
.b2 .grip { margin: 0 1px 0 2px; }
.sep { flex: none; width: 2px; height: 30px; margin: 0 4.700px 0 5.500px; background: #8a8a8a; box-shadow: 1px 0 #fff; }

.work { height: 717px; border-top: 2px solid #787878; display: flex; }
.browser { width: 65px; height: 714px; border-right: 3px solid #8a8a8a; border-bottom: 2px solid #a8a8a8; display: flex; flex-direction: column; background: #f0f0f0; }
.br-head { height: 27px; padding: 4px 0 0 3px; display: flex; gap: 3px; }
.stub { width: 5px; height: 9px; border: solid #a5a5a5; border-width: 2px 0; margin: 6px -2px 0 0; }
.btn3d { width: 18px; height: 18px; background: #f0f0f0; border: solid #fff; border-width: 1px 2px 2px 1px; border-right-color: #777; border-bottom-color: #777; display: flex; align-items: center; justify-content: center; }
.btn3d svg { width: 15px; height: 15px; }
.br-frame { margin-left: 9px; width: 36px; height: 648px; background: #fff; border: 1px solid #dcdcdc; padding: 6px 5px 2px 5px; }
.br-tree { position: relative; height: 612px; width: 26px; border: solid #808080; border-width: 3px 0 0 3px; background: #fff; }
.vdots { position: absolute; left: 16px; top: 2px; height: 482px; border-left: 1.500px dotted #888; }
.ticks { position: absolute; left: 17px; top: 13px; width: 5px; height: 470px; background: repeating-linear-gradient(#8a8a8a 0 1px, transparent 1px 24px); }
.minus { position: absolute; left: 10px; top: 486px; width: 11px; height: 13px; border: 1.500px solid #888; border-right: 0; background: linear-gradient(#45618f, #45618f) 2px 5px / 8px 1px no-repeat #f4f4f4; }
.br-foot { height: 26px; background: #efefef; }
.br-nav { display: flex; margin: 7px 0 0 9px; height: 24px; }
.br-nav span { width: 24px; border: solid #b4b4b4; border-width: 1px 2px 2px 1px; display: flex; }
.br-nav .half { width: 13px; border-left: 0; }
.br-nav svg { height: 21px; width: 21px; }
.br-nav .half svg { width: 11px; }

.editor { display: grid; grid-template: 688px 24px / 1827px 24px; height: 714px; border-bottom: 1px solid #ddd; }
.diagram { width: 1827px; height: 687px; background: #fff; overflow: hidden; box-shadow: 0 1px #fff; }
.blk path { stroke: #2b2b2b; stroke-width: 1.800; fill: none; }
.con path, .cls path { stroke: #0e87ff; stroke-width: 1.700; fill: none; }
.cls rect { stroke: #2690ff; stroke-width: 2; }
.pers rect, .pers path { stroke: #8383f5; }
.txt { font: 24px "Liberation Sans", Arial, sans-serif; letter-spacing: .18px; fill: #161616; }
.vscroll, .hscroll { background: #f0f0f0; display: flex; align-items: center; }
.vscroll { flex-direction: column; padding: 7px 0 7px; }
.chev { width: 12px; height: 12px; }
.down { transform: rotate(180deg); }
.left { transform: rotate(-90deg); }
.right { transform: rotate(90deg); }
.vscroll i { width: 22px; height: 26px; background: #cdcdcd; margin-top: 309px; }
.vscroll .down { margin-top: auto; }
.hscroll { padding: 0 7px; }
.hscroll i { width: 56px; height: 22px; background: #cdcdcd; margin-left: 865px; }
.hscroll .right { margin-left: auto; }

.output { height: 74px; display: flex; border-bottom: 2px solid #b0b0b0; background: linear-gradient(#2a2a2a, #2a2a2a) 0 6px / 100% 2px no-repeat #f0f0f0; padding-top: 13px; }
.out-ctl { width: 28px; padding-left: 5px; display: flex; flex-direction: column; gap: 3px; }
.hgrip { width: 10px; height: 12px; margin: 2px 0 0 4px; border: solid #aaa; border-width: 0 2px; background: linear-gradient(#fff, #fff) 2px 0 / 2px 100% no-repeat; }
.out-box { width: 1881px; height: 54px; border: solid #808080; border-width: 2px 0 0 2px; border-right: 1px solid #ddd; border-bottom: 2px solid #fff; display: grid; grid-template: 25px 25px / 1855px 24px; }
.out-text { background: #fff; }
.out-v { display: flex; flex-direction: column; align-items: center; padding: 2px 4px 0 0; }
.out-tabs { grid-column: 1 / 3; display: flex; height: 26px; }
.navs { display: flex; width: 50px; }
.navs span { width: 25px; height: 25px; border: 2px solid #222; border-width: 2px 1px; display: flex; align-items: center; justify-content: center; background: #f0f0f0; }
.navs svg { width: 12px; height: 14px; }
.tabs { width: 765px; height: 26px; position: relative; display: flex; align-items: center; font: 18.300px/24px "Liberation Sans", Arial, sans-serif; color: #222; }
.tab-shape { position: absolute; left: 0; top: 0; width: 761px; height: 26px; }
.tabs span { position: relative; }
.t1 { margin-left: 16px; }
.t2 { margin-left: 22px; }
.t3 { margin-left: 21px; }
.t4 { margin-left: 22px; }
.out-h { display: flex; align-items: center; width: 1032px; padding-left: 6px; border-left: 1px solid #999; }
.out-h i { width: 987px; height: 23px; background: #cdcdcd; margin: 0 8px 0 6px; }
.resize { width: 14px; height: 14px; margin: 10px 0 0 16px; }

.status { height: 28px; display: flex; justify-content: space-between; align-items: center; padding: 4px 16px 0 4px; font-size: 16px; color: #2a2a2a; border-top: 1px solid #ddd; }

.taskbar { height: 60px; background: linear-gradient(90deg, #20383f 0, #21373f 55%, #1c2e40 72%, #1b2a45 88%, #1e2c48 100%); display: flex; color: #fff; }
.start { width: 73px; display: flex; align-items: center; justify-content: center; }
.start svg { width: 25px; height: 24px; }
.search { width: 431px; height: 60px; border: 2px solid #bdbdbd; background: #f2f2f2; display: flex; align-items: center; padding-left: 15px; color: #2b2b2b; font-size: 21px; }
.lens { width: 25px; height: 26px; margin-right: 17px; margin-top: -4px; }
.search span { width: 269px; letter-spacing: .25px; padding-top: 2px; }
.plane { width: 44px; height: 46px; }
.pilot { width: 40px; height: 46px; margin-left: 5px; }
.taskview { width: 75px; display: flex; align-items: center; padding-left: 23px; }
.taskview svg { width: 26px; height: 26px; }
.apps { display: flex; }
.app { width: 75.100px; height: 60px; position: relative; display: flex; align-items: center; justify-content: center; }
.app svg { width: 36px; height: 36px; }
.run::after { content: ""; position: absolute; bottom: 0; left: 7px; right: 7px; height: 3px; background: #76b9ed; }
.multi::after { border-right: 14px solid #5689ae; }
.active { background: #4b5b66; margin-left: 1px; width: 73px; }
.active::after { left: 0; right: 0; }
.tray { flex: 1; display: flex; align-items: center; padding-left: 77px; }
.weather { width: 38px; height: 36px; margin-top: -5px; }
.temp { font-size: 20px; width: 82px; padding-left: 11px; }
.up { width: 18px; height: 12px; margin-left: 11px; }
.wifi { width: 19px; height: 19px; margin-left: 18px; margin-top: 3px; }
.bat { width: 24px; height: 14px; margin-left: 14px; }
.vol { width: 24px; height: 20px; margin-left: 11px; }
.lang { font-size: 17.500px; width: 36px; margin-left: 17px; letter-spacing: -.3px; }
.clock { width: 104px; margin-left: 11px; display: flex; flex-direction: column; align-items: center; font-size: 17.500px; line-height: 28px; letter-spacing: -.05px; }
.notif { width: 61px; height: 60px; margin-left: 6px; background: #29304c; display: flex; align-items: center; justify-content: center; box-shadow: 12px 0 #1e2c48, 13px 0 #7d8592; }
.notif svg { width: 26px; height: 26px; }

.dialog { position: absolute; left: 820px; top: 287px; width: 630px; height: 424px; border: 1px solid #585858; background: #f0f0f0; box-shadow: 0 8px 22px rgba(0,0,0,.42), 0 0 4px rgba(0,0,0,.2); color: #111; font-size: 17px; }
.d-title { height: 44px; background: #fff; display: flex; align-items: center; padding-left: 11px; letter-spacing: -.05px; }
.d-ic { width: 24px; height: 24px; margin-right: 5px; margin-top: -2px; }
.d-ctl { width: 184px; height: 44px; margin-left: auto; margin-right: 1px; }
.d-tools { height: 50px; display: flex; align-items: center; }
.d-tools span { height: 24px; line-height: 26px; }
.d-tools u { text-underline-offset: 2px; text-decoration-thickness: 1px; }
.i-new { width: 34px; height: 34px; margin: -2px 0 0 4px; }
.l-new { width: 72px; margin-left: 5px; }
.i-mode { width: 32px; height: 24px; margin-left: 16px; }
.l-mode { width: 48px; margin-left: 6px; }
.caret { border: 6px solid transparent; border-top: 7px solid #000; border-bottom: 0; }
.c1 { margin-left: 16px; }
.i-clock { width: 30px; height: 30px; margin-left: 16px; }
.l-rep { width: 70px; margin-left: 7px; }
.c2 { margin-left: 15px; }
.i-x { width: 28px; height: 28px; margin-left: 13px; }
.l-ann { width: 62px; margin-left: 8px; color: #9b9b9b; }
.i-gear { width: 29px; height: 33px; margin-left: 13px; }
.l-opt { margin-left: 8px; letter-spacing: .1px; }
.d-info { height: 72px; display: flex; background: linear-gradient(#fff, #e4e4f1); padding: 12px 13px 0 14px; }
.d-info p { margin: 0; line-height: 24px; flex: 1; white-space: nowrap; letter-spacing: .065px; }
.help { width: 24px; height: 24px; margin-top: 1px; }
.d-head { display: flex; align-items: center; height: 38px; margin-top: 14px; padding-left: 15px; }
.d-logo { width: 36px; height: 34px; }
.d-head h2 { margin: -3px 0 0 19px; font-size: 23px; font-weight: 400; white-space: nowrap; letter-spacing: .03px; }
.d-up { width: 17px; height: 11px; margin: 2px 19px 0 auto; }
.d-body p { margin: 14px 0 0 69px; line-height: 24px; white-space: nowrap; letter-spacing: -.08px; }
.d-body button { display: block; margin: 16px 0 0 66px; width: 299px; height: 39px; border: 0; background: #0078d7; color: #fff; font: 17px "Open Sans", "Noto Sans", sans-serif; letter-spacing: -.12px; text-align: left; padding: 0 0 0 9px; white-space: nowrap; }
```
